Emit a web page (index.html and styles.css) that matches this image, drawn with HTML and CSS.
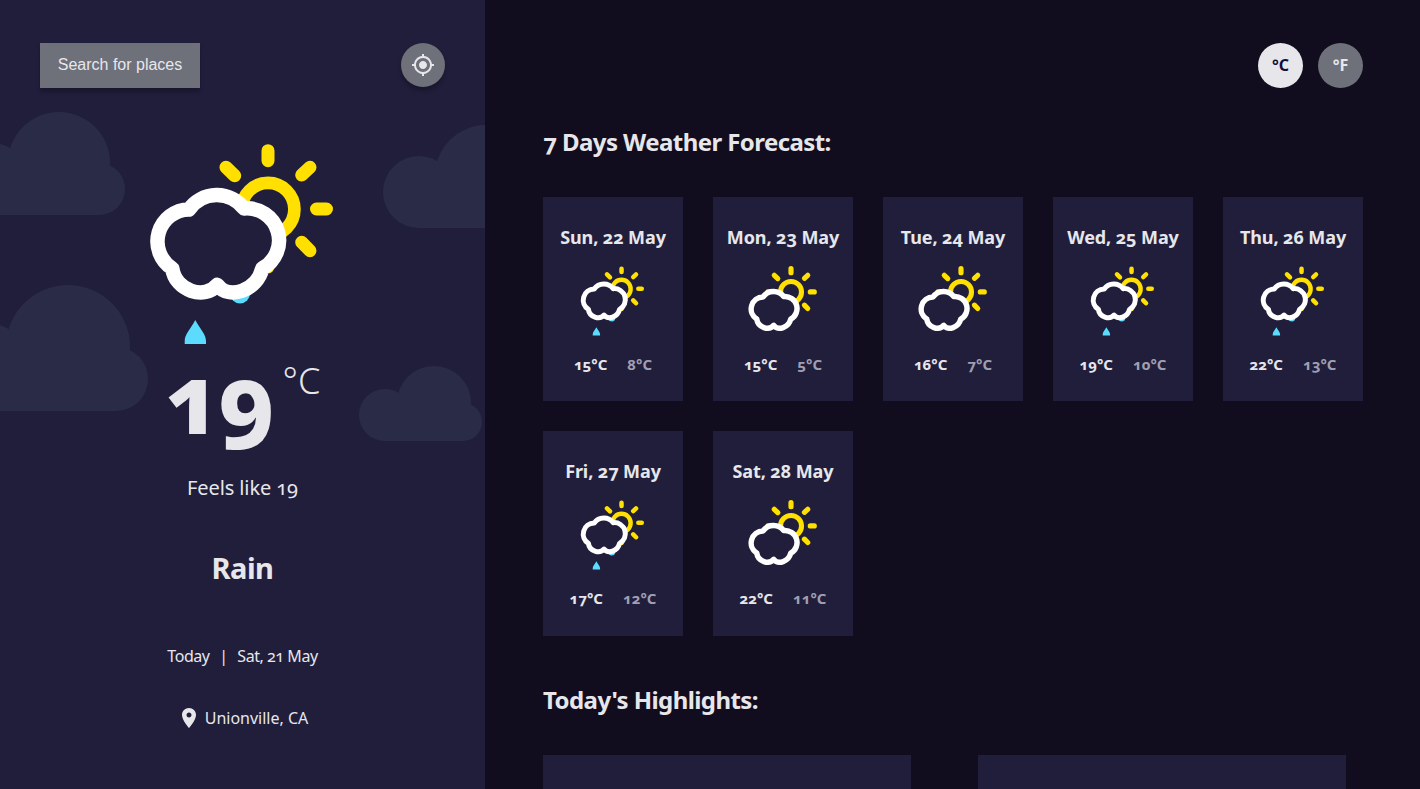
FILE: index.html
```html
<!DOCTYPE html>
<html lang="en">
<head>
<meta charset="utf-8">
<title>Weather</title>
<link rel="stylesheet" href="styles.css">
</head>
<body>
<svg class="defs" width="0" height="0" aria-hidden="true">
  <defs>
    <g id="sun">
      <path class="rays" d="M268 150.7V160.7M316.5 209H326.5M301.7 175L310 167.3M226 167.3L234.7 175.7M301.7 242.3L310 250.7M268 257V267M210 209H220M226 250.7L234.7 242.3"/>
      <circle class="ring" cx="268" cy="209.3" r="26.4"/>
    </g>
    <path id="cloud" class="cloud" d="M190 209A34 34 0 0 1 245 208A32 32 0 0 1 263.3 268C258 290 230 300 218.3 284.3C206 300 176 290 173.3 268A32 32 0 0 1 190 209Z"/>
    <g id="rain-art">
      <use href="#sun"/>
      <circle class="drop" cx="240" cy="293.5" r="10"/>
      <use href="#cloud" transform="translate(-1 .5)"/>
      <path class="drop" d="M195.3 320C190 330 184.7 334 184.7 341V344H206V341C206 334 200.6 330 195.3 320Z"/>
    </g>
    <symbol id="rain-hero" viewBox="150 144 183 201"><use href="#rain-art"/></symbol>
    <symbol id="rain-card" viewBox="142.2 143 202.3 202.3"><use href="#rain-art"/></symbol>
    <symbol id="clear-card" viewBox="0 0 70 70">
      <use href="#sun" transform="translate(-63.66 -57.3) scale(.398)"/>
      <use href="#cloud" transform="translate(-56.55 -47.88) scale(.377)"/>
    </symbol>
  </defs>
</svg>
<div class="app">
  <aside class="side">
    <svg class="bg-clouds" viewBox="0 0 485 789" aria-hidden="true">
      <g>
        <circle cx="59" cy="163" r="51"/><circle cx="99" cy="189" r="26"/><circle cx="-8" cy="179" r="36"/><rect x="-8" y="170" width="107" height="45"/>
      </g>
      <g>
        <circle cx="486" cy="176" r="51"/><circle cx="419" cy="192" r="36"/><rect x="419" y="183" width="107" height="45"/>
      </g>
      <g>
        <circle cx="68" cy="347" r="62"/><circle cx="116" cy="379" r="32"/><circle cx="-14" cy="367" r="44"/><rect x="-14" y="360" width="130" height="51"/>
      </g>
      <g>
        <circle cx="434" cy="403" r="37"/><circle cx="463" cy="422" r="19"/><circle cx="385" cy="415" r="26"/><rect x="385" y="408" width="78" height="33"/>
      </g>
    </svg>
    <div class="side-top">
      <button class="search">Search for places</button>
      <button class="locate" aria-label="Use my location">
        <svg width="24" height="24" viewBox="0 0 24 24"><path d="M12 8c-2.21 0-4 1.79-4 4s1.79 4 4 4 4-1.79 4-4-1.79-4-4-4zm8.94 3c-.46-4.17-3.77-7.48-7.94-7.94V1h-2v2.06C6.83 3.52 3.52 6.83 3.06 11H1v2h2.06c.46 4.17 3.77 7.48 7.94 7.94V23h2v-2.06c4.17-.46 7.48-3.77 7.94-7.94H23v-2h-2.06zM12 19c-3.87 0-7-3.13-7-7s3.13-7 7-7 7 3.13 7 7-3.13 7-7 7z"/></svg>
      </button>
    </div>
    <svg class="hero-icon"><use href="#rain-hero"/></svg>
    <div class="now">
      <span class="now-value">19</span><span class="now-unit"><sup>°</sup>C</span>
    </div>
    <p class="feels">Feels like 19</p>
    <p class="state">Rain</p>
    <p class="date">Today <span class="sep">|</span> Sat, 21 May</p>
    <p class="place">
      <svg width="24" height="24" viewBox="0 0 24 24"><path d="M12 2C8.13 2 5 5.13 5 9c0 5.25 7 13 7 13s7-7.75 7-13c0-3.87-3.13-7-7-7zm0 9.5c-1.38 0-2.5-1.12-2.5-2.5s1.12-2.5 2.5-2.5 2.5 1.12 2.5 2.5-1.12 2.5-2.5 2.5z"/></svg>
      Unionville, CA
    </p>
  </aside>
  <main class="main">
    <div class="units">
      <button class="unit active">°C</button>
      <button class="unit">°F</button>
    </div>
    <h2 class="forecast-title">7 Days Weather Forecast:</h2>
    <div class="cards">
      <article class="card"><h3>Sun, 22 May</h3><svg class="card-icon"><use href="#rain-card"/></svg><div class="temps"><span class="max">15°C</span><span class="min">8°C</span></div></article>
      <article class="card"><h3>Mon, 23 May</h3><svg class="card-icon"><use href="#clear-card"/></svg><div class="temps"><span class="max">15°C</span><span class="min">5°C</span></div></article>
      <article class="card"><h3>Tue, 24 May</h3><svg class="card-icon"><use href="#clear-card"/></svg><div class="temps"><span class="max">16°C</span><span class="min">7°C</span></div></article>
      <article class="card"><h3>Wed, 25 May</h3><svg class="card-icon"><use href="#rain-card"/></svg><div class="temps"><span class="max">19°C</span><span class="min">10°C</span></div></article>
      <article class="card"><h3>Thu, 26 May</h3><svg class="card-icon"><use href="#rain-card"/></svg><div class="temps"><span class="max">22°C</span><span class="min">13°C</span></div></article>
      <article class="card"><h3>Fri, 27 May</h3><svg class="card-icon"><use href="#rain-card"/></svg><div class="temps"><span class="max">17°C</span><span class="min">12°C</span></div></article>
      <article class="card"><h3>Sat, 28 May</h3><svg class="card-icon"><use href="#clear-card"/></svg><div class="temps"><span class="max">22°C</span><span class="min">11°C</span></div></article>
    </div>
    <h2 class="highlights-title">Today's Highlights:</h2>
    <div class="highlights">
      <div class="panel"></div>
      <div class="panel"></div>
    </div>
  </main>
</div>
</body>
</html>
```
FILE: styles.css
```css
* { box-sizing: border-box; }
html, body { margin: 0; height: 100%; overflow: hidden; }
body {
  background: #110d1e;
  color: #e7e7eb;
  font-family: "Noto Sans", Lato, "Liberation Sans", sans-serif;
  font-variant-numeric: oldstyle-nums;
}
p, h2, h3 { margin: 0; }
button { border: 0; padding: 0; cursor: pointer; }
.defs { position: absolute; }

.rays { fill: none; stroke: #ffe000; stroke-width: 13; stroke-linecap: round; }
.ring { fill: none; stroke: #ffe000; stroke-width: 12.7; }
.cloud { fill: #201e3b; stroke: #fff; stroke-width: 14.5; stroke-linejoin: round; }
.drop { fill: #5bdcff; }

.app { display: flex; height: 789px; overflow: hidden; }

.side {
  position: relative;
  flex: 0 0 485px;
  display: flex;
  flex-direction: column;
  align-items: center;
  padding: 43px 40px 0;
  background: #201e3b;
  overflow: hidden;
}
.bg-clouds { position: absolute; top: 0; left: 0; width: 485px; height: 789px; fill: #2a2c47; }
.side > *:not(.bg-clouds) { position: relative; }

.side-top { display: flex; justify-content: space-between; width: 100%; }
.search {
  width: 160px;
  height: 45px;
  padding-bottom: 2px;
  background: #6e707a;
  color: #e7e7eb;
  font: 16px "Liberation Sans", Arial, sans-serif;
  box-shadow: 0 4px 4px rgba(0, 0, 0, .25);
}
.locate {
  display: flex;
  align-items: center;
  justify-content: center;
  width: 44px;
  height: 44px;
  border-radius: 50%;
  background: #6e707a;
  box-shadow: 0 4px 4px rgba(0, 0, 0, .25);
}
.locate svg { fill: #e7e7eb; }

.hero-icon { width: 183px; height: 201px; margin: 56px 0 0 0; transform: translateX(-1px); }

.now { display: flex; align-items: flex-start; height: 106px; margin-top: 4px; }
.now-value { font-size: 96px; line-height: 96px; font-weight: 800; letter-spacing: -3px; }
.now-unit { font-size: 36px; line-height: 48px; font-weight: 300; margin: 8px 0 0 10px; }
.now-unit sup { font-size: 36px; line-height: 0; vertical-align: baseline; }

.feels { font-size: 20px; line-height: 24px; margin-top: 21px; letter-spacing: -.1px; }
.state { font-size: 29px; line-height: 36px; font-weight: 700; margin-top: 50px; letter-spacing: -.5px; }
.date { font-size: 16px; line-height: 20px; margin-top: 60px; letter-spacing: -.45px; }
.sep { margin: 0 6px; }
.place { display: flex; align-items: center; gap: 4px; font-size: 16px; line-height: 24px; margin-top: 40px; }
.place svg { fill: #e7e7eb; }

.main { flex: 1; padding: 43px 57px 0 58px; min-width: 0; }
.units { display: flex; justify-content: flex-end; gap: 15px; }
.unit {
  width: 45px;
  height: 45px;
  padding-bottom: 2px;
  border-radius: 50%;
  background: #6e707a;
  color: #e7e7eb;
  font-family: inherit;
  font-size: 16px;
  font-weight: 700;
}
.unit.active { background: #e7e7eb; color: #110e3c; }

.forecast-title { font-size: 24px; line-height: 30px; font-weight: 700; margin-top: 39px; letter-spacing: -.58px; }
.cards { display: flex; flex-wrap: wrap; gap: 30px; margin-top: 39.8px; }
.card {
  display: flex;
  flex-direction: column;
  align-items: center;
  width: 140px;
  height: 204.5px;
  padding-top: 29px;
  background: #201e3b;
}
.card h3 { font-size: 18px; line-height: 22px; font-weight: 700; white-space: nowrap; letter-spacing: -.1px; }
.card-icon { width: 70px; height: 70px; margin-top: 18px; }
.temps { display: flex; justify-content: center; gap: 20px; margin-top: 19px; font-size: 15px; line-height: 18px; font-weight: 700; }
.min { color: #a09fb1; }

.highlights-title { font-size: 24px; line-height: 30px; font-weight: 700; margin-top: 49.7px; letter-spacing: -.58px; }
.highlights { display: flex; gap: 67px; margin-top: 40px; }
.panel { width: 368px; height: 200px; background: #201e3b; }
```
